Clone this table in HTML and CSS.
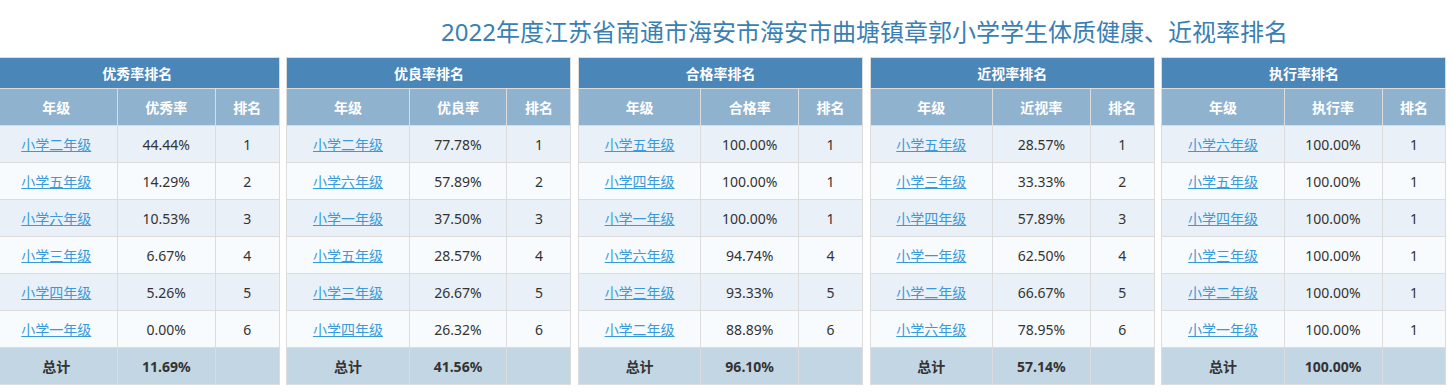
FILE: index.html
```html
<!DOCTYPE html>
<html lang="zh">
<head>
<meta charset="utf-8">
<title>排名</title>
<link rel="stylesheet" href="styles.css">
</head>
<body>
<h1 class="title">2022年度江苏省南通市海安市海安市曲塘镇章郭小学学生体质健康、近视率排名</h1>
<div class="tables">
  <table class="rank">
    <colgroup><col class="c1"><col class="c2"><col class="c3"></colgroup>
    <thead>
      <tr class="h1"><th colspan="3">优秀率排名</th></tr>
      <tr class="h2"><th>年级</th><th>优秀率</th><th>排名</th></tr>
    </thead>
    <tbody>
      <tr><td><a href="#">小学二年级</a></td><td>44.44%</td><td>1</td></tr>
      <tr><td><a href="#">小学五年级</a></td><td>14.29%</td><td>2</td></tr>
      <tr><td><a href="#">小学六年级</a></td><td>10.53%</td><td>3</td></tr>
      <tr><td><a href="#">小学三年级</a></td><td>6.67%</td><td>4</td></tr>
      <tr><td><a href="#">小学四年级</a></td><td>5.26%</td><td>5</td></tr>
      <tr><td><a href="#">小学一年级</a></td><td>0.00%</td><td>6</td></tr>
      <tr class="total"><td>总计</td><td>11.69%</td><td></td></tr>
    </tbody>
  </table>
  <table class="rank">
    <colgroup><col class="c1"><col class="c2"><col class="c3"></colgroup>
    <thead>
      <tr class="h1"><th colspan="3">优良率排名</th></tr>
      <tr class="h2"><th>年级</th><th>优良率</th><th>排名</th></tr>
    </thead>
    <tbody>
      <tr><td><a href="#">小学二年级</a></td><td>77.78%</td><td>1</td></tr>
      <tr><td><a href="#">小学六年级</a></td><td>57.89%</td><td>2</td></tr>
      <tr><td><a href="#">小学一年级</a></td><td>37.50%</td><td>3</td></tr>
      <tr><td><a href="#">小学五年级</a></td><td>28.57%</td><td>4</td></tr>
      <tr><td><a href="#">小学三年级</a></td><td>26.67%</td><td>5</td></tr>
      <tr><td><a href="#">小学四年级</a></td><td>26.32%</td><td>6</td></tr>
      <tr class="total"><td>总计</td><td>41.56%</td><td></td></tr>
    </tbody>
  </table>
  <table class="rank">
    <colgroup><col class="c1"><col class="c2"><col class="c3"></colgroup>
    <thead>
      <tr class="h1"><th colspan="3">合格率排名</th></tr>
      <tr class="h2"><th>年级</th><th>合格率</th><th>排名</th></tr>
    </thead>
    <tbody>
      <tr><td><a href="#">小学五年级</a></td><td>100.00%</td><td>1</td></tr>
      <tr><td><a href="#">小学四年级</a></td><td>100.00%</td><td>1</td></tr>
      <tr><td><a href="#">小学一年级</a></td><td>100.00%</td><td>1</td></tr>
      <tr><td><a href="#">小学六年级</a></td><td>94.74%</td><td>4</td></tr>
      <tr><td><a href="#">小学三年级</a></td><td>93.33%</td><td>5</td></tr>
      <tr><td><a href="#">小学二年级</a></td><td>88.89%</td><td>6</td></tr>
      <tr class="total"><td>总计</td><td>96.10%</td><td></td></tr>
    </tbody>
  </table>
  <table class="rank">
    <colgroup><col class="c1"><col class="c2"><col class="c3"></colgroup>
    <thead>
      <tr class="h1"><th colspan="3">近视率排名</th></tr>
      <tr class="h2"><th>年级</th><th>近视率</th><th>排名</th></tr>
    </thead>
    <tbody>
      <tr><td><a href="#">小学五年级</a></td><td>28.57%</td><td>1</td></tr>
      <tr><td><a href="#">小学三年级</a></td><td>33.33%</td><td>2</td></tr>
      <tr><td><a href="#">小学四年级</a></td><td>57.89%</td><td>3</td></tr>
      <tr><td><a href="#">小学一年级</a></td><td>62.50%</td><td>4</td></tr>
      <tr><td><a href="#">小学二年级</a></td><td>66.67%</td><td>5</td></tr>
      <tr><td><a href="#">小学六年级</a></td><td>78.95%</td><td>6</td></tr>
      <tr class="total"><td>总计</td><td>57.14%</td><td></td></tr>
    </tbody>
  </table>
  <table class="rank">
    <colgroup><col class="c1"><col class="c2"><col class="c3"></colgroup>
    <thead>
      <tr class="h1"><th colspan="3">执行率排名</th></tr>
      <tr class="h2"><th>年级</th><th>执行率</th><th>排名</th></tr>
    </thead>
    <tbody>
      <tr><td><a href="#">小学六年级</a></td><td>100.00%</td><td>1</td></tr>
      <tr><td><a href="#">小学五年级</a></td><td>100.00%</td><td>1</td></tr>
      <tr><td><a href="#">小学四年级</a></td><td>100.00%</td><td>1</td></tr>
      <tr><td><a href="#">小学三年级</a></td><td>100.00%</td><td>1</td></tr>
      <tr><td><a href="#">小学二年级</a></td><td>100.00%</td><td>1</td></tr>
      <tr><td><a href="#">小学一年级</a></td><td>100.00%</td><td>1</td></tr>
      <tr class="total"><td>总计</td><td>100.00%</td><td></td></tr>
    </tbody>
  </table>
</div>
</body>
</html>
```

FILE: styles.css
```css
html, body {
  margin: 0;
  padding: 0;
  background: #ffffff;
}
body {
  font-family: "Noto Sans", "Noto Sans CJK SC", sans-serif;
  color: #333333;
  overflow: hidden;
}
.title {
  margin: 17px 0 10px 0;
  padding-left: 441px;
  font-size: 24px;
  line-height: 30px;
  font-weight: normal;
  color: #3a7fb3;
  white-space: nowrap;
}
.tables {
  display: flex;
  gap: 6.7px;
  margin-left: -5.3px;
}
.rank {
  width: 285px;
  flex: none;
  border-collapse: collapse;
  table-layout: fixed;
  border: 1px solid #dcdcdc;
  font-size: 14px;
}
.c1 { width: 43%; }
.c2 { width: 34.5%; }
.c3 { width: 22.5%; }
.rank th,
.rank td {
  border: 1px solid #dcdcdc;
  padding: 0;
  text-align: center;
  vertical-align: middle;
}
.rank .h1 th {
  height: 30px;
  background: #4a86b8;
  color: #ffffff;
  font-weight: bold;
  font-size: 14px;
}
.rank .h2 th {
  height: 36px;
  background: #8fb2cf;
  color: #ffffff;
  font-weight: bold;
  font-size: 14px;
}
.rank td {
  height: 36px;
  color: #333333;
}
.rank tbody tr:nth-child(odd) td {
  background: #e9f0f7;
}
.rank tbody tr:nth-child(even) td {
  background: #f8fbfe;
}
.rank tbody tr.total td {
  background: #c3d6e4;
  font-weight: bold;
  color: #333333;
}
.rank a {
  color: #3a9ad9;
  text-decoration: underline;
}
```
